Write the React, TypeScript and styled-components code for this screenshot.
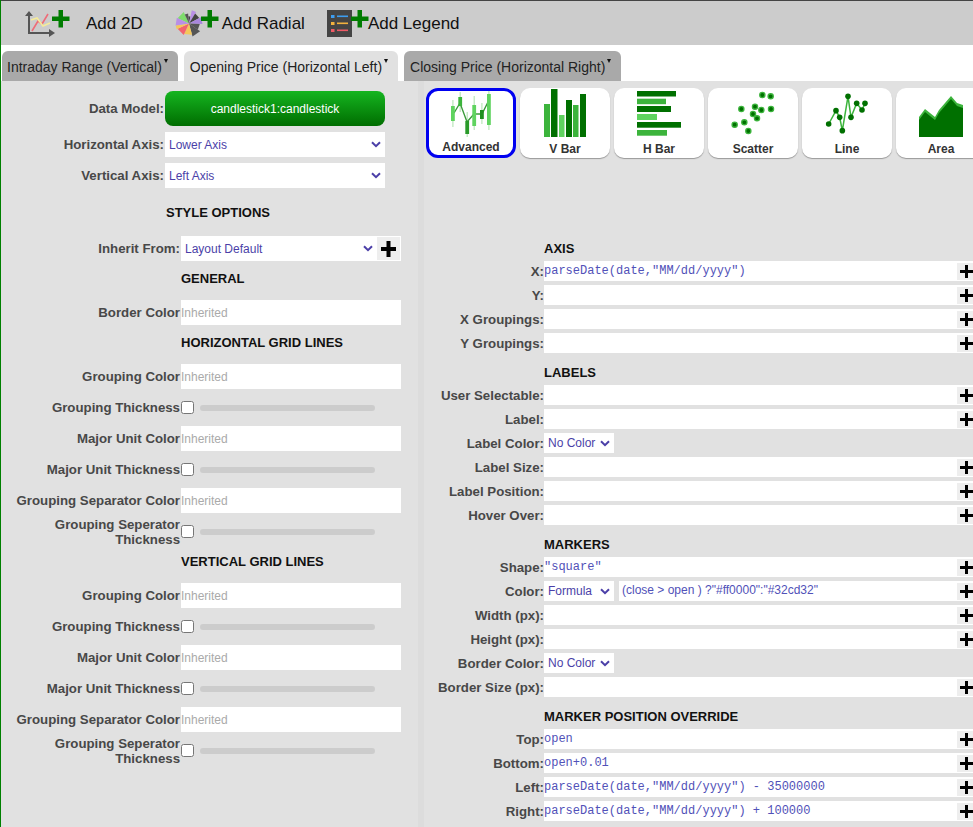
import React from "react";
import styled, { createGlobalStyle } from "styled-components";

const Global = createGlobalStyle`
  html, body { margin: 0; padding: 0; background: #fff; }
  body { font-family: "Liberation Sans", Arial, sans-serif; overflow: hidden; }
  * { box-sizing: border-box; }
`;

const Page = styled.div`
  width: 973px; height: 827px; overflow: hidden; display: flex; flex-direction: column;
  border-left: 1px solid #008000; background: #fff;
`;
const Toolbar = styled.div`
  height: 45px; flex: none; background: #ccc; border-top: 1px solid #444;
  display: flex; align-items: center; padding-left: 26px; gap: 22px;
`;
const ToolButton = styled.div<{ $end?: number }>`
  display: flex; align-items: center; height: 44px; padding-right: ${p => p.$end ?? 0}px;
`;
const ToolIcon = styled.svg`
  display: block; flex: none; overflow: visible;
`;
const ToolText = styled.span<{ $gap: number }>`
  margin-left: ${p => p.$gap}px; font-size: 17px; color: #111; white-space: nowrap; position: relative; top: 1px;
`;
const TabBar = styled.div`
  height: 36px; flex: none; padding: 6px 0 0 1px; display: flex; gap: 6px; background: #fff;
`;
const Tab = styled.div<{ $active?: boolean }>`
  height: 30px; padding: 7px 5px 0 6px; border-radius: 6px 6px 0 0; font-size: 14px; line-height: 18px;
  color: #222; white-space: nowrap; display: flex; align-items: flex-start;
  background: ${p => (p.$active ? "#e1e1e1" : "#a9a9a9")};
  &:first-child { padding-left: 5px; }
`;
const Caret = styled.span`
  width: 0; height: 0; margin: 1px 5px 0 2px; border-left: 2.5px solid transparent; border-right: 2.5px solid transparent;
  border-top: 4px solid #111; flex: none;
`;
const Main = styled.div`
  flex: 1; min-height: 0; display: grid; grid-template-columns: 417px 6px 1fr; background: #e1e1e1;
`;
const LeftPanel = styled.div`
  padding-top: 10px; display: flex; flex-direction: column; min-width: 0;
`;
const Stripe = styled.div`
  background: #dcdcdc;
`;
const RightPanel = styled.div`
  min-width: 0; overflow: hidden; padding-top: 7px;
`;
const Group = styled.div`
  display: flex; flex-direction: column; gap: 6px;
`;
const FormRow = styled.div<{ $label: number }>`
  display: grid; grid-template-columns: ${p => p.$label}px 220px; grid-auto-rows: 25px; column-gap: 1px; height: 25px; align-items: center;
`;
const FieldLabel = styled.label`
  font-size: 13.25px; line-height: 15px; font-weight: 700; color: #484848; text-align: right; white-space: nowrap;
`;
const ModelRow = styled.div`
  display: grid; grid-template-columns: 163px 220px; column-gap: 1px; height: 35px; align-items: center; margin-bottom: 6px;
`;
const ModelButton = styled.div`
  height: 35px; border-radius: 8px; background: linear-gradient(#15b520, #006d00); color: #fff;
  font-size: 12px; display: flex; align-items: center; justify-content: center;
`;
const SelectBox = styled.div`
  height: 100%; background: #fff; color: #4b3fa8; font-size: 12px; padding: 0 4px;
  display: flex; align-items: center; justify-content: space-between; white-space: nowrap;
`;
const Chevron = styled.svg`
  width: 10px; height: 7px; flex: none;
`;
const InheritWrap = styled.div`
  height: 25px; background: #fff; display: flex; border: 1px solid #fff; border-left: 0;
`;
const InheritSelect = styled.div`
  flex: 1; display: flex; align-items: center; justify-content: space-between; padding: 0 4px;
  color: #4b3fa8; font-size: 12px;
`;
const BigPlus = styled.div`
  width: 23px; background: #eee; display: flex; align-items: center; justify-content: center;
`;
const TextBox = styled.input`
  height: 25px; width: 100%; border: 0; outline: 0; background: #fff; padding: 0; margin: 0;
  font: 12px "Liberation Sans", Arial, sans-serif; color: #999;
  &::placeholder { color: #aaa; opacity: 1; }
`;
const ThickWrap = styled.div`
  display: flex; align-items: center; height: 25px;
`;
const Check = styled.input`
  width: 13px; height: 13px; margin: 0; flex: none;
`;
const Slider = styled.div`
  width: 175px; height: 6px; margin-left: 6px; border-radius: 3px; background: #ccc;
`;
const LeftHeading = styled.div<{ $indent: number; $wide?: boolean }>`
  margin: ${p => (p.$wide ? "16px" : "9px")} 0 ${p => (p.$wide ? "16px" : "14px")} ${p => p.$indent}px;
  height: 16px; line-height: 18px; font-size: 13px; font-weight: 700; color: #111;
`;
const CardRow = styled.div`
  display: flex; gap: 4px; padding-left: 2px; margin-bottom: 82px;
`;
const Card = styled.div<{ $selected?: boolean }>`
  width: 90px; height: 70px; flex: none; background: #fff; display: flex; flex-direction: column;
  align-items: center; border: ${p => (p.$selected ? "3px solid #0000f0" : "0")};
  border-radius: ${p => (p.$selected ? "12px" : "10px")};
  box-shadow: ${p => (p.$selected ? "none" : "0 1px 1px #999")};
`;
const CardIcon = styled.svg<{ $h: number }>`
  width: 50px; height: ${p => p.$h}px; display: block; flex: none;
`;
const CardName = styled.div<{ $selected?: boolean }>`
  font-size: 12px; line-height: 14px; font-weight: 700; color: #333; margin-top: ${p => (p.$selected ? 3 : 4)}px;
`;
const SectionHead = styled.div`
  margin: 11px 0 5px 120px; height: 16px; line-height: 18px; font-size: 13px; font-weight: 700; color: #111;
`;
const PropRow = styled.div`
  display: flex; height: 20px; margin-bottom: 4px; width: 549px;
`;
const PropLabel = styled.label`
  width: 120px; flex: none; font-size: 13.25px; line-height: 21px; font-weight: 700; color: #484848; text-align: right; white-space: nowrap;
`;
const PropField = styled.div`
  flex: 1; min-width: 0; display: flex; background: #fff; height: 20px;
`;
const PropSelect = styled.div`
  width: 70px; height: 20px; flex: none; background: #fff; color: #4b3fa8; font-size: 12px; padding: 0 4px;
  display: flex; align-items: center; justify-content: space-between;
`;
const PropGap = styled.div`
  width: 5px; flex: none; background: #e1e1e1;
`;
const FormulaText = styled.div<{ $sans?: boolean }>`
  flex: 1; min-width: 0; white-space: pre; height: 20px; color: #5151b8; padding-left: ${p => (p.$sans ? 3 : 0)}px;
  font: ${p => (p.$sans ? `12px/19px "Liberation Sans", Arial, sans-serif` : `12px/20px "Liberation Mono", "Courier New", monospace`)};
`;
const SmallPlus = styled.div`
  width: 16px; height: 17px; margin-top: 2px; padding-left: 2px; flex: none; background: #eee; display: flex; align-items: center; justify-content: center;
`;

const ChevronIcon = () => (
  <Chevron viewBox="0 0 10 7"><path d="M1 1.2 5 5.2 9 1.2" fill="none" stroke="#4b3fa8" strokeWidth="2" /></Chevron>
);
const Plus2 = ({ x, y }: { x: number; y: number }) => (
  <path d={`M${x} ${y + 6.5}h6.500v-6.500h4.500v6.500h6.500v4.500h-6.500v6.500h-4.500v-6.500h-6.500z`} fill="#007c00" />
);

const Icon2D = () => (
  <ToolIcon width={43} height={30} viewBox="0 0 43 30">
    <path d="M2 6V25H24" fill="none" stroke="#555" strokeWidth="2" />
    <path d="M-2 8 2 3 6 8zM22 21l6 4-6 4z" fill="#555" />
    <path d="M5 23 11 13 15 16 21 6" fill="none" stroke="#ee6c78" strokeWidth="1.6" />
    <path d="M4 12 10 10 16 18 23 15" fill="none" stroke="#f6ec9a" strokeWidth="1.6" />
    <Plus2 x={25} y={2} />
  </ToolIcon>
);

const wedge = (a: number, b: number, r: number) => {
  const cx = 13, cy = 15.5;
  const pt = (d: number) => {
    const t = (d - 90) * Math.PI / 180;
    return `${(cx + 0.9 * r * Math.cos(t)).toFixed(1)} ${(cy + 0.9 * r * Math.sin(t)).toFixed(1)}`;
  };
  return `M${cx} ${cy}L${pt(a)}L${pt(b)}Z`;
};
const radial: [number, number, number, string][] = [
  [-65, -25, 14, "#7edc6c"], [-25, -5, 11, "#555"], [-5, 12, 8, "#444"], [12, 32, 15, "#b98fe6"],
  [32, 62, 13, "#444"], [62, 92, 15, "#a986dd"], [92, 125, 12, "#555"], [125, 165, 15, "#555"],
  [165, 205, 13, "#f4c75a"], [205, 245, 14, "#f2636e"], [245, 262, 15, "#f4c75a"], [262, 295, 15, "#b98fe6"],
];
const IconRadial = () => (
  <ToolIcon width={42} height={30} viewBox="0 0 42 30">
    {radial.map((w, i) => <path key={i} d={wedge(w[0], w[1], w[2])} fill={w[3]} />)}
    <Plus2 x={25} y={2} />
  </ToolIcon>
);
const IconLegend = () => (
  <ToolIcon width={41} height={30} viewBox="0 0 41 30">
    <rect x="0" y="2" width="25" height="27" fill="#444" />
    <rect x="4" y="7" width="3.5" height="3" fill="#3d9df0" />
    <rect x="10" y="7.500" width="11" height="1.600" fill="#3d9df0" />
    <rect x="4" y="14" width="3.5" height="3" fill="#f2b23e" />
    <rect x="10" y="14.500" width="11" height="1.600" fill="#f2b23e" />
    <rect x="4" y="21" width="3.5" height="3" fill="#ee5a66" />
    <rect x="10" y="21.500" width="11" height="1.600" fill="#ee5a66" />
    <Plus2 x={24} y={2} />
  </ToolIcon>
);

const D = "#007000", M = "#3cb43c", L = "#5fd35f";

const candles: [number, number, number, number, number, string][] = [
  [451, 106, 121, 100, 127, L], [458.3, 97, 106, 92, 112, M], [465.3, 121, 134, 112, 138, "#2a9a2a"],
  [472.3, 105, 126, 96, 130, L], [480, 110, 119, 103, 124, "#1f8f1f"], [487, 94, 125, 88, 130, L],
];
const IconAdvanced = () => (
  <CardIcon $h={46} viewBox="446 91 50 46">
    {candles.map((c, i) => <rect key={"w" + i} x={c[0] + 1.3} y={c[3]} width="1.2" height={c[4] - c[3]} fill="#b9e6b9" />)}
    <path d="M454 113 460 103 467 122 474 114 482 114 488 102" fill="none" stroke="#3a9a3a" strokeWidth="1.4" />
    {candles.map((c, i) => <rect key={"b" + i} x={c[0]} y={c[1]} width="3.8" height={c[2] - c[1]} fill={c[5]} />)}
  </CardIcon>
);
const vbars: [number, number, number, string][] = [
  [544, 104, 6, M], [551, 89, 6.5, D], [559, 115, 5.5, L], [566, 100, 6, D], [573, 105, 5.5, M], [580, 94, 6, D],
];
const IconV = () => (
  <CardIcon $h={50} viewBox="540 88 50 50">
    {vbars.map((b, i) => <rect key={i} x={b[0]} y={b[1]} width={b[2]} height={137 - b[1]} fill={b[3]} />)}
  </CardIcon>
);
const hbars: [number, number, number, string][] = [
  [91, 676, 5.5, D], [98.7, 666, 5.5, M], [106, 671, 6, D], [114, 657, 6, L], [122, 681, 5.7, D], [130, 667, 5.7, M],
];
const IconH = () => (
  <CardIcon $h={50} viewBox="634 88 50 50">
    {hbars.map((b, i) => <rect key={i} x={637} y={b[0]} width={b[1] - 637} height={b[2]} fill={b[3]} />)}
  </CardIcon>
);
const dots = [[451, 30], [476, 34], [388, 72], [429, 65], [448, 75], [477, 72], [423, 87], [435, 100], [397, 112], [368, 119], [409, 138]];
const IconScatter = () => (
  <CardIcon $h={50} viewBox="728 88 50 50">
    {dots.map((d, i) => (
      <circle key={i} cx={612 + d[0] / 3} cy={85 + d[1] / 3} r="2.6" fill={D} stroke={M} strokeWidth="1.3" />
    ))}
  </CardIcon>
);
const linePts = [[86, 192], [108, 152], [119, 172], [127, 212], [144, 109], [153, 172], [170, 130], [186, 150], [195, 130]]
  .map(p => [800 + p[0] / 3, 60 + p[1] / 3]);
const IconLine = () => (
  <CardIcon $h={50} viewBox="822 88 50 50">
    <polyline points={linePts.map(p => p.join(",")).join(" ")} fill="none" stroke={M} strokeWidth="1.5" />
    {linePts.map((p, i) => <circle key={i} cx={p[0]} cy={p[1]} r="2.8" fill={D} />)}
  </CardIcon>
);
const IconArea = () => (
  <CardIcon $h={50} viewBox="916 88 50 50">
    <path d="M919 117 925 109 935 117 939 110 951 96 957 103 963 105V137H919Z" fill={M} />
    <path d="M919 120 925 112 935 120 939 113 951 99 957 106 963 108V137H919Z" fill={D} />
  </CardIcon>
);

const Big = () => (
  <svg width="15" height="16" viewBox="0 0 15 16"><path d="M5.500 0h4v6h5.500v4H9.500v6h-4v-6H0V6h5.500z" fill="#000" /></svg>
);
const Small = () => (
  <svg width="13" height="13" viewBox="0 0 13 13"><path d="M5 0h3v5h5v3H8v5H5V8H0V5h5z" fill="#000" /></svg>
);

const tabs = [
  { name: "Intraday Range (Vertical)" },
  { name: "Opening Price (Horizontal Left)", active: true },
  { name: "Closing Price (Horizontal Right)" },
];
const cards = [
  { name: "Advanced", icon: <IconAdvanced />, selected: true },
  { name: "V Bar", icon: <IconV /> },
  { name: "H Bar", icon: <IconH /> },
  { name: "Scatter", icon: <IconScatter /> },
  { name: "Line", icon: <IconLine /> },
  { name: "Area", icon: <IconArea /> },
];

const GridSection = () => (
  <Group>
    <FormRow $label={179}><FieldLabel>Grouping Color</FieldLabel><TextBox readOnly placeholder="Inherited" /></FormRow>
    <FormRow $label={179}><FieldLabel>Grouping Thickness</FieldLabel><ThickWrap><Check type="checkbox" readOnly /><Slider /></ThickWrap></FormRow>
    <FormRow $label={179}><FieldLabel>Major Unit Color</FieldLabel><TextBox readOnly placeholder="Inherited" /></FormRow>
    <FormRow $label={179}><FieldLabel>Major Unit Thickness</FieldLabel><ThickWrap><Check type="checkbox" readOnly /><Slider /></ThickWrap></FormRow>
    <FormRow $label={179}><FieldLabel>Grouping Separator Color</FieldLabel><TextBox readOnly placeholder="Inherited" /></FormRow>
    <FormRow $label={179}><FieldLabel>Grouping Seperator<br />Thickness</FieldLabel><ThickWrap><Check type="checkbox" readOnly /><Slider /></ThickWrap></FormRow>
  </Group>
);

type Prop = { label: string; value?: string; select?: string; sans?: string };
const Section = ({ title, rows }: { title: string; rows: Prop[] }) => (
  <>
    <SectionHead>{title}</SectionHead>
    {rows.map(r => (
      <PropRow key={r.label}>
        <PropLabel>{r.label}:</PropLabel>
        {r.select && !r.sans ? (
          <PropSelect>{r.select}<ChevronIcon /></PropSelect>
        ) : (
          <PropField>
            {r.select && <PropSelect>{r.select}<ChevronIcon /></PropSelect>}
            {r.select && <PropGap />}
            <FormulaText $sans={!!r.sans}>{r.sans ?? r.value ?? ""}</FormulaText>
            <SmallPlus><Small /></SmallPlus>
          </PropField>
        )}
      </PropRow>
    ))}
  </>
);

const dateExpr = 'parseDate(date,"MM/dd/yyyy")';

export default function App() {
  return (
    <Page>
      <Global />
      <Toolbar>
        <ToolButton $end={11}><Icon2D /><ToolText $gap={16}>Add 2D</ToolText></ToolButton>
        <ToolButton><IconRadial /><ToolText $gap={4}>Add Radial</ToolText></ToolButton>
        <ToolButton><IconLegend /><ToolText $gap={0}>Add Legend</ToolText></ToolButton>
      </Toolbar>
      <TabBar>
        {tabs.map(t => (
          <Tab key={t.name} $active={t.active}>{t.name}<Caret /></Tab>
        ))}
      </TabBar>
      <Main>
        <LeftPanel>
          <ModelRow>
            <FieldLabel>Data Model:</FieldLabel>
            <ModelButton>candlestick1:candlestick</ModelButton>
          </ModelRow>
          <Group>
            <FormRow $label={163}><FieldLabel>Horizontal Axis:</FieldLabel><SelectBox>Lower Axis<ChevronIcon /></SelectBox></FormRow>
            <FormRow $label={163}><FieldLabel>Vertical Axis:</FieldLabel><SelectBox>Left Axis<ChevronIcon /></SelectBox></FormRow>
          </Group>
          <LeftHeading $indent={165} $wide>STYLE OPTIONS</LeftHeading>
          <FormRow $label={179}>
            <FieldLabel>Inherit From:</FieldLabel>
            <InheritWrap>
              <InheritSelect>Layout Default<ChevronIcon /></InheritSelect>
              <BigPlus><Big /></BigPlus>
            </InheritWrap>
          </FormRow>
          <LeftHeading $indent={180}>GENERAL</LeftHeading>
          <FormRow $label={179}><FieldLabel>Border Color</FieldLabel><TextBox readOnly placeholder="Inherited" /></FormRow>
          <LeftHeading $indent={180}>HORIZONTAL GRID LINES</LeftHeading>
          <GridSection />
          <LeftHeading $indent={180}>VERTICAL GRID LINES</LeftHeading>
          <GridSection />
        </LeftPanel>
        <Stripe />
        <RightPanel>
          <CardRow>
            {cards.map(c => (
              <Card key={c.name} $selected={c.selected}>
                {c.icon}
                <CardName $selected={c.selected}>{c.name}</CardName>
              </Card>
            ))}
          </CardRow>
          <Section title="AXIS" rows={[
            { label: "X", value: dateExpr }, { label: "Y" }, { label: "X Groupings" }, { label: "Y Groupings" },
          ]} />
          <Section title="LABELS" rows={[
            { label: "User Selectable" }, { label: "Label" }, { label: "Label Color", select: "No Color" },
            { label: "Label Size" }, { label: "Label Position" }, { label: "Hover Over" },
          ]} />
          <Section title="MARKERS" rows={[
            { label: "Shape", value: '"square"' },
            { label: "Color", select: "Formula", sans: '(close > open ) ?"#ff0000":"#32cd32"' },
            { label: "Width (px)" }, { label: "Height (px)" }, { label: "Border Color", select: "No Color" }, { label: "Border Size (px)" },
          ]} />
          <Section title="MARKER POSITION OVERRIDE" rows={[
            { label: "Top", value: "open" }, { label: "Bottom", value: "open+0.01" },
            { label: "Left", value: dateExpr + " - 35000000" }, { label: "Right", value: dateExpr + " + 100000" },
          ]} />
        </RightPanel>
      </Main>
    </Page>
  );
}
